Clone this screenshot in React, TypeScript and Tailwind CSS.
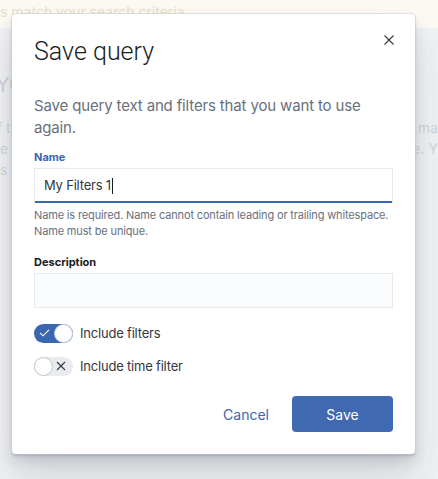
import React from 'react';

const Toggle: React.FC<{ on: boolean; label: string }> = ({ on, label }) => (
  <div className="flex items-center gap-[7px]">
    <div
      className={`flex h-[19px] w-[39px] items-center justify-between rounded-full ${
        on ? 'bg-[#3b67b1]' : 'bg-[#e9ebef]'
      }`}
    >
      {on ? (
        <>
          <svg className="ml-[5px]" width="11" height="8" viewBox="0 0 11 8" fill="none">
            <path d="M1 3.8 4 6.8 10 0.8" stroke="#fff" strokeWidth="1.1" />
          </svg>
          <span className="h-[19px] w-[19px] rounded-full border border-[#c8cfdb] bg-white" />
        </>
      ) : (
        <>
          <span className="h-[19px] w-[19px] rounded-full border border-[#c3c7cf] bg-white" />
          <svg className="mr-[7px]" width="10" height="10" viewBox="0 0 10 10" fill="none">
            <path d="M1 1 9 9M9 1 1 9" stroke="#343741" strokeWidth="1.1" />
          </svg>
        </>
      )}
    </div>
    <span className="text-[13px] leading-[20px] tracking-[-0.2px] text-[#343741]">{label}</span>
  </div>
);

export default function App() {
  return (
    <div className="relative h-[479px] w-[438px] overflow-hidden bg-[#f0f1f4] font-[Inter,'Liberation_Sans',sans-serif]">
      {/* page behind the overlay */}
      <div className="h-[28px] bg-[#fbf9f2] pt-[2px] text-[14px] leading-[20px] text-[#e6dfcb] whitespace-nowrap">
        s match your search criteria
      </div>
      <div className="mt-[44px] whitespace-nowrap text-[20px] leading-[26px] text-[#cfd2d8] -ml-[4px]">
        YO
      </div>
      <div className="mt-[20px] space-y-[1px] text-[14px] leading-[20px] text-[#d2d5db]">
        <div className="flex whitespace-nowrap">
          <span className="w-[419px] -ml-[3px]">f t</span>
          <span>y ma</span>
        </div>
        <div className="flex whitespace-nowrap">
          <span className="w-[416px]">e r</span>
          <span>e. Y</span>
        </div>
        <div className="flex whitespace-nowrap">
          <span className="w-[416px]">s c</span>
        </div>
      </div>

      {/* modal */}
      <div className="absolute left-[12px] top-[14px] flex h-[440px] w-[403px] flex-col rounded-[4px] bg-white px-[22px] pt-[20px] shadow-[0_0_0_1px_rgba(200,205,214,0.5),0_2px_3px_rgba(60,66,80,0.25),0_8px_12px_rgba(60,66,80,0.12),0_20px_30px_rgba(60,66,80,0.1),0_30px_50px_rgba(60,66,80,0.06)]">
        <button className="absolute right-[21px] top-[21px] flex h-[10px] w-[10px] items-center justify-center">
          <svg width="10" height="10" viewBox="0 0 10 10" fill="none">
            <path d="M0.5 0.5 9.5 9.5M9.5 0.5 0.5 9.5" stroke="#343741" strokeWidth="1.1" />
          </svg>
        </button>

        <h2 className="font-['Roboto',sans-serif] text-[25px] font-light leading-[36px] text-[#1a1c21]">Save query</h2>

        <p className="mt-[25px] text-[15px] leading-[22px] tracking-[-0.15px] text-[#69707d]">
          Save query text and filters that you want to use again.
        </p>

        <label className="mt-[10px] text-[11px] font-bold leading-[16px] text-[#3b67b1]">Name</label>
        <div className="mt-[3px] flex h-[35px] items-center border border-b-0 border-[#e6e9ee] bg-white pl-[9px] shadow-[inset_0_-2px_0_#3b67b1]">
          <span className="text-[13px] tracking-[-0.2px] text-[#343741]">My Filters 1</span>
          <span className="ml-px h-[16px] w-px bg-[#1a1c21]" />
        </div>
        <p className="mt-[4px] text-[11px] leading-[16px] tracking-[-0.15px] text-[#69707d]">
          Name is required. Name cannot contain leading or trailing whitespace. Name must be unique.
        </p>

        <label className="mt-[15px] text-[11px] font-bold leading-[16px] text-[#1a1c21]">Description</label>
        <div className="mt-[3px] h-[35px] border border-[#e6e9ee] bg-[#fbfcfd]" />

        <div className="mt-[15px] flex flex-col gap-[13px]">
          <Toggle on label="Include filters" />
          <Toggle on={false} label="Include time filter" />
        </div>

        <div className="mt-[20px] flex items-center justify-end">
          <button className="mr-[23px] text-[14px] text-[#3b67b1]">Cancel</button>
          <button className="h-[36px] w-[101px] rounded-[4px] bg-[#3f6ab1] text-[14px] text-white">Save</button>
        </div>
      </div>
    </div>
  );
}
